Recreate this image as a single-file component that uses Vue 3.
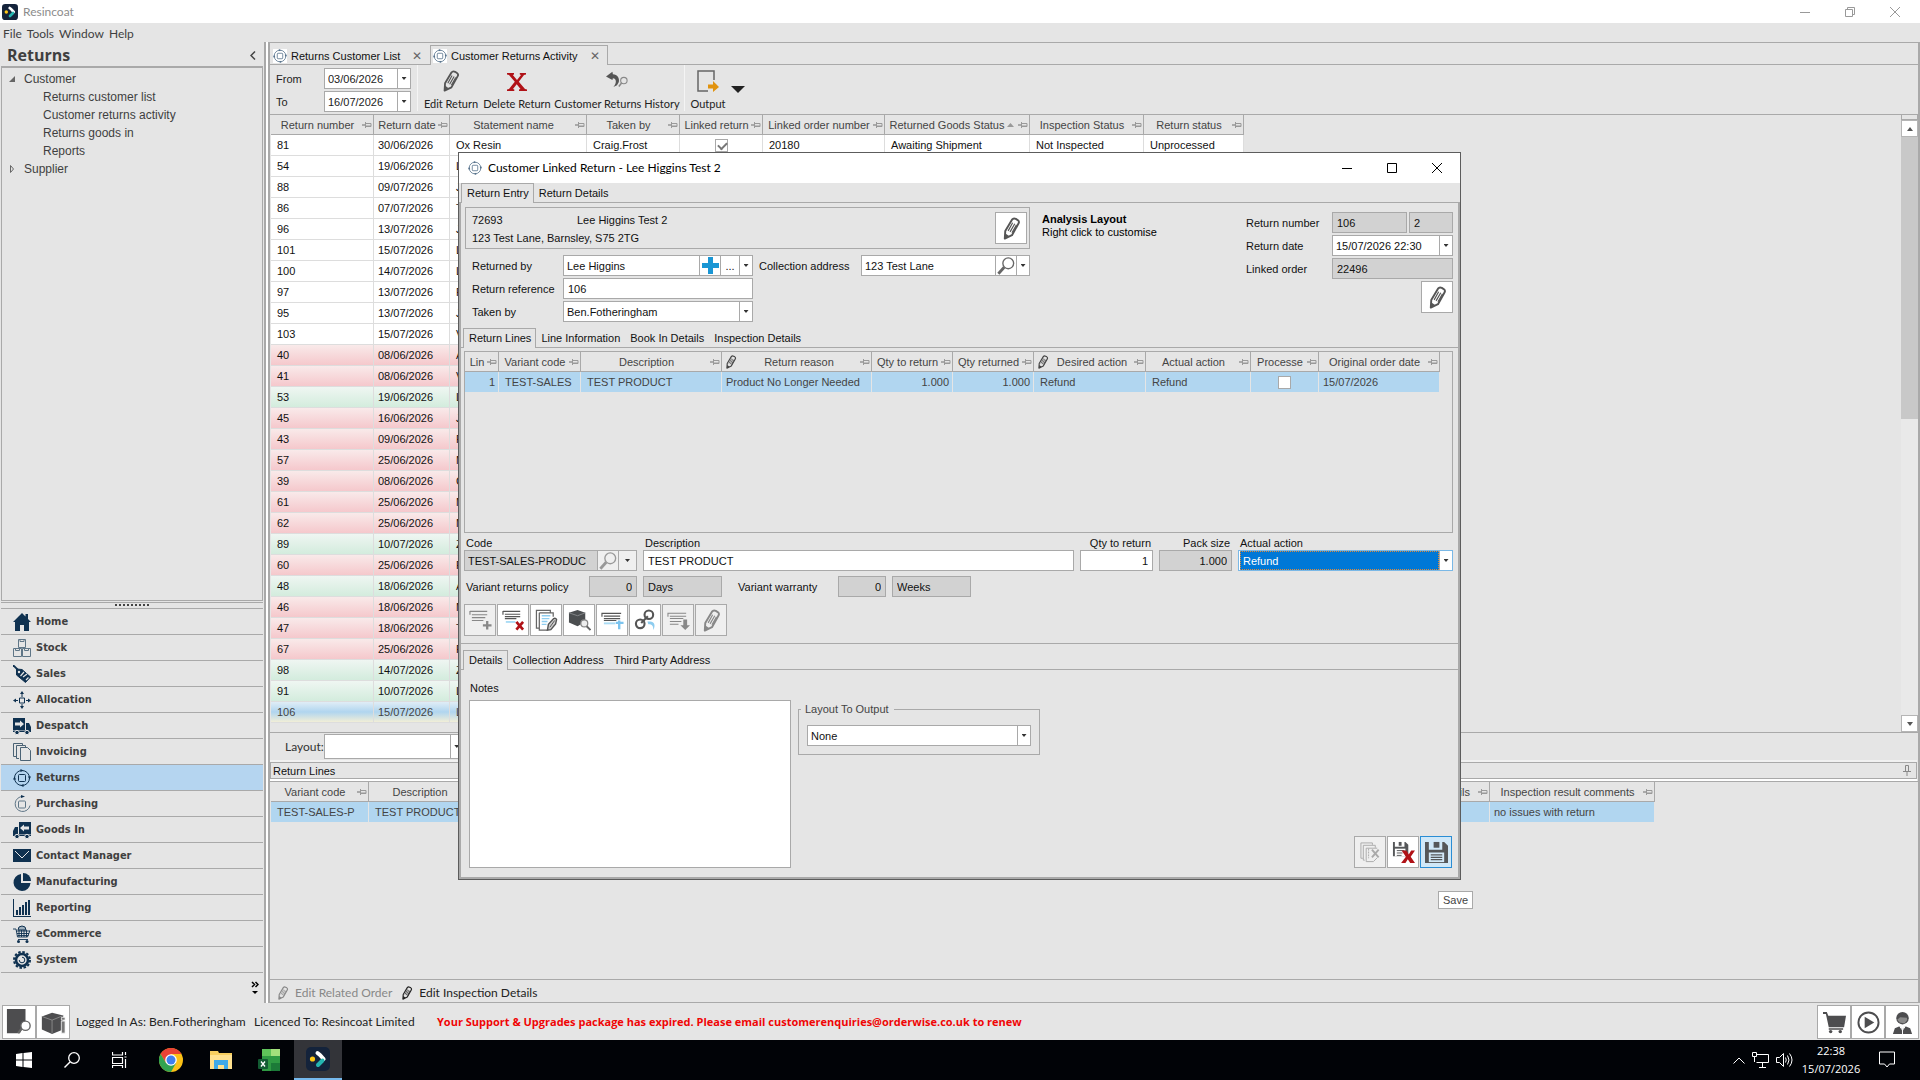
<script setup>
import { ref } from 'vue'

const menus = ['File', 'Tools', 'Window', 'Help']
const treeItems = ['Returns customer list', 'Customer returns activity', 'Returns goods in', 'Reports']
const modules = [
  ['Home', 'home'], ['Stock', 'stock'], ['Sales', 'tag'], ['Allocation', 'alloc'],
  ['Despatch', 'truck'], ['Invoicing', 'pages'], ['Returns', 'returns'], ['Purchasing', 'purchase'],
  ['Goods In', 'goodsin'], ['Contact Manager', 'mail'], ['Manufacturing', 'pie'],
  ['Reporting', 'chart'], ['eCommerce', 'basket'], ['System', 'gear']
]

const gridCols = [
  { t: 'Return number', w: 103 }, { t: 'Return date', w: 76 }, { t: 'Statement name', w: 137 },
  { t: 'Taken by', w: 93 }, { t: 'Linked return', w: 83 }, { t: 'Linked order number', w: 122 },
  { t: 'Returned Goods Status', w: 145, sort: true }, { t: 'Inspection Status', w: 114 }, { t: 'Return status', w: 100 }
]
const gridRows = [
  ['81', '30/06/2026', 'Ox Resin', ''], ['54', '19/06/2026', 'L', ''], ['88', '09/07/2026', 'J', ''],
  ['86', '07/07/2026', 'T', ''], ['96', '13/07/2026', 'J', ''], ['101', '15/07/2026', 'L', ''],
  ['100', '14/07/2026', 'L', ''], ['97', '13/07/2026', 'F', ''], ['95', '13/07/2026', 'J', ''],
  ['103', '15/07/2026', 'V', ''], ['40', '08/06/2026', 'A', 'red'], ['41', '08/06/2026', 'V', 'red'],
  ['53', '19/06/2026', 'L', 'green'], ['45', '16/06/2026', 'J', 'red'], ['43', '09/06/2026', 'F', 'red'],
  ['57', '25/06/2026', 'M', 'red'], ['39', '08/06/2026', 'C', 'red'], ['61', '25/06/2026', 'M', 'red'],
  ['62', '25/06/2026', 'M', 'red'], ['89', '10/07/2026', 'Z', 'green'], ['60', '25/06/2026', 'F', 'red'],
  ['48', '18/06/2026', 'A', 'green'], ['46', '18/06/2026', 'M', 'red'], ['47', '18/06/2026', 'T', 'red'],
  ['67', '25/06/2026', 'F', 'red'], ['98', '14/07/2026', 'Z', 'green'], ['91', '10/07/2026', 'L', 'green'],
  ['106', '15/07/2026', 'L', 'current']
]

const lineCols = [
  { t: 'Lin', w: 34 }, { t: 'Variant code', w: 82 }, { t: 'Description', w: 141 },
  { t: 'Return reason', w: 150, edit: true }, { t: 'Qty to return', w: 81 }, { t: 'Qty returned', w: 81 },
  { t: 'Desired action', w: 112, edit: true }, { t: 'Actual action', w: 105 }, { t: 'Processe', w: 68 },
  { t: 'Original order date', w: 121 }
]
const lowerCols = [
  { t: 'Variant code', w: 98 }, { t: 'Description', w: 112 }, { t: '', w: 869 },
  { t: 'Details', w: 140, end: true }, { t: 'Inspection result comments', w: 165 }
]
const lineTools = [
  ['addline', 'Add line', true], ['delline', 'Delete line', false], ['editdoc', 'Edit notes', false],
  ['boxfind', 'Find stock', false], ['insline', 'Insert line', false], ['link', 'Link', false],
  ['downline', 'Move down', true], ['pencil', 'Edit', true]
]

const dateFrom = ref('03/06/2026')
const dateTo = ref('16/07/2026')
const returnedBy = ref('Lee Higgins')
const reference = ref('106')
const collection = ref('123 Test Lane')
const returnDate = ref('15/07/2026 22:30')
const lineDesc = ref('TEST PRODUCT')
const lineQty = ref('1')
const notes = ref('')
</script>

<template>
  <svg class="defs" aria-hidden="true">
    <symbol id="i-logo" viewBox="0 0 24 24">
      <rect width="24" height="24" rx="5" fill="#14233b" />
      <circle cx="6.500" cy="12" r="2.600" fill="#ffc815" />
      <path d="M11.500 6l2.500 2 3.600 4" fill="none" stroke="#fff" stroke-width="4" stroke-linecap="round" stroke-linejoin="round" />
      <path d="M16.500 13.500l-4.500 4.500" fill="none" stroke="#24b5b0" stroke-width="4" stroke-linecap="round" />
    </symbol>
    <symbol id="i-returns" viewBox="0 0 18 18">
      <circle cx="9" cy="9" r="7.500" fill="none" stroke="currentColor" stroke-width="1" />
      <rect x="5.500" y="5.500" width="7" height="7" rx="1" fill="none" stroke="currentColor" />
      <path d="M7.500 0l3 1.500-3 1.500zM18 7.500l-1.500 3-1.500-3zM10.500 18l-3-1.500 3-1.500zM0 10.500l1.500-3 1.500 3z" fill="currentColor" />
    </symbol>
    <symbol id="i-pencil" viewBox="0 0 24 24">
      <path d="M5 22.500l.5-8L12.500 2.800q1.500-2 4-.8l2 1.200q2 1.300.8 3.500L12.500 19z" fill="none" stroke="currentColor" stroke-width="2" stroke-linejoin="round" />
      <path d="M5 22.500l.4-5.500 4 2.800z" fill="currentColor" />
      <path d="M8.500 14.500L13.200 6M10.500 15.500L15.400 7M12.500 16.500L17.200 8.200" stroke="currentColor" stroke-width="1.200" fill="none" />
    </symbol>
    <symbol id="i-cross" viewBox="0 0 20 18">
      <path d="M0 0h7v1.500L5.800 2 10 7l4-5-1.200-.5V0H19v1.500L17 2l-5.200 6.800L18 16l2 .5V18h-8v-1.500l1.500-.5L9.700 11.200 6 16l1.300.5V18H0v-1.500L2 16l5.800-7.200L2 2 0 1.500z" fill="#b01217" />
    </symbol>
    <symbol id="i-history" viewBox="0 0 24 24">
      <path d="M0 7l7-5 .5 2.500c5 .5 7.500 4 6.500 8.500l-2 3.500-4 2c3.500-3.500 4-9-.5-9.500L7 11z" fill="#555" />
      <circle cx="19.500" cy="11.500" r="3.500" fill="none" stroke="#888" stroke-width="1.200" />
      <path d="M17 14.200l-3 3.800" stroke="#888" stroke-width="1.600" />
    </symbol>
    <symbol id="i-output" viewBox="0 0 22 22">
      <path d="M17 10V1H1v20h10" fill="none" stroke="#666" stroke-width="1.500" />
      <path d="M11 14.500h5V11l6 6-6 5v-3.500h-5z" fill="#e1930f" />
    </symbol>
    <symbol id="i-pin" viewBox="0 0 10 8">
      <path d="M0 4h3" stroke="#aaa" stroke-width="2" /><path d="M3.500 1v6M4 2.500h5v3H4M4 5h5" stroke="#999" fill="none" />
    </symbol>
    <symbol id="i-search" viewBox="0 0 20 20">
      <circle cx="12.500" cy="7" r="6" fill="none" stroke="currentColor" stroke-width="1.500" />
      <path d="M8 11.500L1.500 18.500" stroke="currentColor" stroke-width="3.200" />
    </symbol>
    <symbol id="i-home" viewBox="0 0 18 18"><path d="M9 0l3.500 3.500V1H15v5l3 3h-2v9h-5v-6H7v6H2V9H0z" fill="currentColor" /></symbol>
    <symbol id="i-stock" viewBox="0 0 18 18"><path d="M5.500.5h7v8h-7zM.5 9.500h8v8h-8zM9.500 9.500h8v8h-8zM7 .5v2h4v-2M2.500 9.500v2h4v-2M11.500 9.500v2h4v-2" fill="none" stroke="#5f7687" /></symbol>
    <symbol id="i-tag" viewBox="0 0 18 18">
      <path d="M0 0l5 5" stroke="currentColor" stroke-width="1.800" />
      <path d="M3.500 4l5.500.500 8.500 7.500-5 5.500-9-7.500z" fill="currentColor" stroke="currentColor" stroke-linejoin="round" />
      <circle cx="6" cy="7" r="1.200" fill="#e5e5e5" />
      <path d="M7.500 11l3.500-4M10 12l4-3M13 15l2.500-2.500" stroke="#e5e5e5" stroke-width="1.200" />
    </symbol>
    <symbol id="i-alloc" viewBox="0 0 18 18">
      <path d="M6.500 7h5v5h-5zM9 2v4M9 13v3M1 9.500h4M13 9.500h4" fill="none" stroke="currentColor" />
      <path d="M9 0l2 3H7zM9 18l-2-3h4zM0 9.500l3-2v4zM18 9.500l-3-2v4z" fill="currentColor" />
    </symbol>
    <symbol id="i-truck" viewBox="0 0 18 18">
      <path d="M0 1h12v12H0zM13 6h3l2 4v4h-5z" fill="currentColor" />
      <path d="M0 13.500h18v1.500H0z" fill="currentColor" />
      <circle cx="4" cy="15.500" r="2.200" fill="currentColor" stroke="#e5e5e5" /><circle cx="14" cy="15.500" r="2.200" fill="currentColor" stroke="#e5e5e5" />
      <path d="M2 5.500h5V3.500l4 3.500-4 3.500V8.500H2z" fill="#e5e5e5" />
    </symbol>
    <symbol id="i-goodsin" viewBox="0 0 18 18">
      <path d="M6 1h12v12H6zM5 6H2l-2 4v4h5z" fill="currentColor" />
      <path d="M0 13.500h18v1.500H0z" fill="currentColor" />
      <circle cx="4" cy="15.500" r="2.200" fill="currentColor" stroke="#e5e5e5" /><circle cx="14" cy="15.500" r="2.200" fill="currentColor" stroke="#e5e5e5" />
      <path d="M16 5.500h-5V3.500L7 7l4 3.500V8.500h5z" fill="#e5e5e5" />
    </symbol>
    <symbol id="i-pages" viewBox="0 0 18 18"><path d="M3 13.500H.5V.5h9V3M6 15.500H3.500v-13h9V5M7.500 4.500h7l3 3v10h-10z" fill="none" stroke="#4b6375" /></symbol>
    <symbol id="i-purchase" viewBox="0 0 18 18">
      <path d="M10 1.500a7.500 7.500 0 1 0 7 9" fill="none" stroke="#5f7687" />
      <rect x="5.500" y="6" width="7" height="7" rx="1" fill="none" stroke="#5f7687" />
      <path d="M8 0l4 1.500L8 3z" fill="currentColor" />
    </symbol>
    <symbol id="i-mail" viewBox="0 0 18 18"><path d="M0 2h18v13H0z" fill="currentColor" /><path d="M2 4l7 7 7-7" stroke="#e5e5e5" fill="none" /></symbol>
    <symbol id="i-pie" viewBox="0 0 18 18"><path d="M8 1a8.500 8.500 0 1 0 9.500 9H8z" fill="currentColor" /><path d="M10 0a8 8 0 0 1 8 8h-8z" fill="currentColor" /></symbol>
    <symbol id="i-chart" viewBox="0 0 18 18"><path d="M0 0h1v17h17v1H0zM3 11h2v5H3zM6 8h2v8H6zM9 6h2v10H9zM12 3h2v13h-2zM15 1h2v15h-2z" fill="currentColor" /></symbol>
    <symbol id="i-basket" viewBox="0 0 18 18">
      <path d="M5 5a4 4 0 0 1 8 0z" fill="#9fb0bd" stroke="currentColor" />
      <path d="M0 4h3l1.500 8h10L17 5.500M3 6h14M4 8.500h12M4.500 10.500h11M6 5v7M8.500 5v7M11 5v7M13.500 5v7M5 14.500h10" fill="none" stroke="currentColor" stroke-width=".9" />
      <circle cx="5.500" cy="16.500" r="1.500" fill="currentColor" /><circle cx="14" cy="16.500" r="1.500" fill="currentColor" />
    </symbol>
    <symbol id="i-gear" viewBox="0 0 18 18">
      <circle cx="9" cy="9" r="8" fill="none" stroke="currentColor" stroke-width="2" stroke-dasharray="2.500 1.700" />
      <circle cx="9" cy="9" r="6" fill="none" stroke="currentColor" stroke-width="2.600" />
      <path d="M6.200 9a2.800 2.800 0 1 0 2.800-2.800" fill="none" stroke="currentColor" />
    </symbol>
    <symbol id="i-addline" viewBox="0 0 24 24">
      <path d="M1 2.500h18M1 2v4M3 6h16M3 9h14M3 12h12" stroke="currentColor" fill="none" stroke-width="1.200" />
      <path d="M19 12.500v9M14.500 17h9" stroke="currentColor" stroke-width="2.400" />
    </symbol>
    <symbol id="i-delline" viewBox="0 0 24 24">
      <path d="M1 2.500h18M1 2v4M3 5.500h16M3 8h16M3 10h12" stroke="#555" fill="none" stroke-width="1.200" />
      <path d="M4 13.500h10" stroke="#aadcf5" stroke-width="2" />
      <path d="M15 13.500l7 8M22 13.500l-7 8" stroke="#b01217" stroke-width="2.800" />
    </symbol>
    <symbol id="i-editdoc" viewBox="0 0 24 24">
      <path d="M4 20H1.500V1.500H16V4M4.500 4H19v4M4.500 4v18H13" fill="none" stroke="#666" stroke-width="1.300" />
      <path d="M7 7h9M7 10h8M7 13h6M7 16h5" stroke="#8ecdf0" stroke-width="1.400" />
      <path d="M13 22l1-6 5.500-6q2-1 3 1l-1 4.500-5 6z" fill="#ccc" stroke="#555" stroke-width="1.500" />
      <path d="M15.500 19l5-7" stroke="#555" />
    </symbol>
    <symbol id="i-boxfind" viewBox="0 0 24 24">
      <path d="M1 4l9-3 8 3v9l-8 5-9-4z" fill="#4b4e50" /><path d="M1 4l9 3 8-3" stroke="#85888a" fill="none" />
      <circle cx="17" cy="15" r="3.600" fill="#eee" stroke="#888" stroke-width="1.300" /><path d="M19.500 18l4 4" stroke="#666" stroke-width="2" />
    </symbol>
    <symbol id="i-insline" viewBox="0 0 24 24">
      <path d="M1 4.500h20M1 4v4M3 7.500h17M3 10h17M3 12h13" stroke="#555" fill="none" stroke-width="1.200" />
      <path d="M3 15h12" stroke="#aadcf5" stroke-width="2" /><path d="M19 12v9M15.500 14.500h8" stroke="#7cc4ef" stroke-width="2.500" />
    </symbol>
    <symbol id="i-link" viewBox="0 0 24 24">
      <g fill="none" stroke="#555" stroke-width="2.200"><rect x="11" y="1.500" width="9" height="9" rx="4.500" /><rect x="2" y="11" width="9" height="9" rx="4.500" /><path d="M7.500 14.500l7-7" /></g>
      <path d="M14 13h3c4 0 6 4 3 9 .5-4-1-6-5-6z" fill="#8ecdf0" />
    </symbol>
    <symbol id="i-downline" viewBox="0 0 24 24">
      <path d="M1 4.500h19M1 4v4M3 7.500h17M3 10h14M3 13h12M3 16h9" stroke="currentColor" fill="none" stroke-width="1.100" />
      <path d="M17 11h4v6h3l-5 5-5-5h3z" fill="currentColor" />
    </symbol>
    <symbol id="i-floppy" viewBox="0 0 24 24">
      <path d="M0 1h4v8h14V1h2l4 4v18H0z" fill="#555759" /><path d="M9 1h6v6H9z" fill="#555759" />
      <path d="M4 12h16v10H4z" fill="#d3e9f8" /><path d="M6 14.500h12M6 17h12M6 19.500h12" stroke="#555759" stroke-width="1.300" />
    </symbol>
    <symbol id="i-floppyx" viewBox="0 0 24 24">
      <path d="M1 1h2v5h10V1h1l3 3v12H1z" fill="#555759" /><path d="M7 1h3v4H7z" fill="#555759" />
      <path d="M3 8h11v8H3z" fill="#fff" /><path d="M5 10h8M5 12.500h6M5 15h5" stroke="#555759" />
      <path d="M10 10h5l2.500 4L20 10h4l-4.500 6.500L24 23h-5l-2.500-4L14 23H9.500l5-6.500z" fill="#b01217" />
    </symbol>
    <symbol id="i-docx" viewBox="0 0 24 24">
      <path d="M4 18H2V2h12v2M6 20H4.500V4.500H17V7M7.500 7.500H19M7.500 7.500v14H15l4-4" fill="none" stroke="#aaa" />
      <path d="M10 8v10" stroke="#aaa" stroke-dasharray="2 1" /><path d="M13.500 9l7 8M20.500 9l-7 8" stroke="#aaa" stroke-width="2" />
    </symbol>
    <symbol id="i-docfind" viewBox="0 0 28 28">
      <path d="M1 0h20v14l-6 12H1z" fill="#4d4d4f" /><circle cx="21" cy="18" r="5" fill="#fff" stroke="#666" stroke-width="1.500" /><path d="M17 21l-4 5" stroke="#666" stroke-width="2.500" />
    </symbol>
    <symbol id="i-boxinfo" viewBox="0 0 28 28">
      <path d="M2 8l11-4 12 3v15l-12 5L2 22z" fill="#4d4d4f" /><path d="M2 8l11 4 12-5M13 12v14" stroke="#8a8a8a" fill="none" />
      <path d="M23 13h4v13h-4zM23 9h4v3h-4z" fill="#777" stroke="#fff" stroke-width=".8" />
    </symbol>
    <symbol id="i-cart" viewBox="0 0 24 24"><path d="M0 1h4l1.500 4H24l-2 12H6L3 3H0zM6 18h15v1.500H6z" fill="#4d4d4f" /><circle cx="8" cy="21.500" r="1.800" fill="#4d4d4f" /><circle cx="18" cy="21.500" r="1.800" fill="#4d4d4f" /></symbol>
    <symbol id="i-play" viewBox="0 0 24 24"><circle cx="12" cy="12" r="10.500" fill="none" stroke="#4d4d4f" stroke-width="2" /><path d="M8 6l10 6-10 6z" fill="#4d4d4f" /></symbol>
    <symbol id="i-agent" viewBox="0 0 24 24">
      <circle cx="12" cy="7.500" r="6.500" fill="#4d4d4f" /><path d="M6.500 9l3-2.500 7 .5.5 2.500-3 3.500-5-1z" fill="#8a8a8a" /><path d="M2 24l2-6 5-2 3 3 3-3 5 2 2 6z" fill="#4d4d4f" />
      <path d="M9 16l3 4 3-4M12 19v5" stroke="#fff" fill="none" />
    </symbol>
  </svg>

  <div class="app">
    <header class="titlebar">
      <svg class="s16"><use href="#i-logo" /></svg>
      <span class="grow">Resincoat</span>
      <button class="cap" aria-label="Minimise"><svg viewBox="0 0 10 10"><path d="M0 5.500h10" /></svg></button>
      <button class="cap" aria-label="Restore"><svg viewBox="0 0 10 10"><path d="M.5 2.500h7v7h-7zM2.500 2.500v-2h7v7h-2" /></svg></button>
      <button class="cap" aria-label="Close"><svg viewBox="0 0 10 10"><path d="M0 0l10 10M10 0L0 10" /></svg></button>
    </header>

    <div class="work">
      <aside class="side">
        <nav class="menubar"><a v-for="m in menus" :key="m" href="#">{{ m }}</a></nav>
        <div class="side-title"><h1>Returns</h1><button class="bare" aria-label="Collapse"><svg width="6" height="9" viewBox="0 0 6 9"><path d="M5 0.500L1 4.500l4 4" fill="none" stroke="#444" stroke-width="1.500" /></svg></button></div>
        <div class="tree">
          <div class="node"><svg class="s8" viewBox="0 0 8 8"><path d="M7 1v6H1z" fill="#666" /></svg>Customer</div>
          <a v-for="t in treeItems" :key="t" href="#" class="leaf">{{ t }}</a>
          <div class="node"><svg class="s8" viewBox="0 0 8 8"><path d="M2.500 .5v7l3-3.500z" fill="none" stroke="#666" /></svg>Supplier</div>
        </div>
        <div class="splitter"><i></i></div>
        <nav class="modules">
          <a v-for="m in modules" :key="m[0]" href="#" :class="{ on: m[0] === 'Returns' }"><svg class="s18"><use :href="'#i-' + m[1]" /></svg>{{ m[0] }}</a>
        </nav>
        <div class="more"><svg width="8" height="14" viewBox="0 0 8 14"><path d="M1 1l2.500 2.500L1 6M4.500 1L7 3.500 4.500 6" fill="none" stroke="#000" stroke-width="1.500" /><path d="M1 10h6l-3 3z" /></svg></div>
      </aside>

      <main class="main">
        <div class="tabs maintabs">
          <button class="tab"><svg class="tabico"><use href="#i-returns" /></svg>Returns Customer List<b>✕</b></button>
          <button class="tab on"><svg class="tabico"><use href="#i-returns" /></svg>Customer Returns Activity<b>✕</b></button>
        </div>
        <div class="toolbar">
          <div class="dates">
            <label for="dfrom">From</label>
            <span class="combo"><input id="dfrom" v-model="dateFrom"><button class="dd" aria-label="Pick from date"><i></i></button></span>
            <label for="dto">To</label>
            <span class="combo"><input id="dto" v-model="dateTo"><button class="dd" aria-label="Pick to date"><i></i></button></span>
          </div>
          <button class="tool t-edit"><svg><use href="#i-pencil" /></svg>Edit Return</button>
          <button class="tool t-del"><svg><use href="#i-cross" /></svg>Delete Return</button>
          <button class="tool t-hist"><svg><use href="#i-history" /></svg>Customer Returns History</button>
          <button class="tool t-out"><svg><use href="#i-output" /></svg>Output</button>
          <button class="bare outarrow" aria-label="Output options"><svg width="14" height="7" viewBox="0 0 14 7"><path d="M0 0h14L7 7z" fill="#222" /></svg></button>
        </div>

        <div class="gridwrap">
          <div class="gridbody">
            <table class="grid">
              <colgroup><col v-for="c in gridCols" :key="c.t" :style="{ width: c.w + 'px' }"></colgroup>
              <thead><tr><th v-for="c in gridCols" :key="c.t"><div><span>{{ c.t }}</span><svg v-if="c.sort" class="sort" viewBox="0 0 7 4"><path d="M0 4h7L3.500 0z" fill="#999" /></svg><svg class="pin"><use href="#i-pin" /></svg></div></th></tr></thead>
              <tbody>
                <tr v-for="(r, i) in gridRows" :key="r[0]" :class="r[3]">
                  <td>{{ r[0] }}</td><td class="near">{{ r[1] }}</td><td>{{ r[2] }}</td>
                  <td>{{ i ? '' : 'Craig.Frost' }}</td>
                  <td class="mid"><input v-if="!i" type="checkbox" checked aria-label="Linked return"></td>
                  <td>{{ i ? '' : '20180' }}</td><td>{{ i ? '' : 'Awaiting Shipment' }}</td>
                  <td>{{ i ? '' : 'Not Inspected' }}</td><td>{{ i ? '' : 'Unprocessed' }}</td>
                </tr>
              </tbody>
            </table>
          </div>
          <div class="vscroll"><span class="stub"></span><button aria-label="Scroll up"><svg viewBox="0 0 6 4"><path d="M0 4h6L3 0z" /></svg></button><span class="thumb"></span><span class="track"></span><button aria-label="Scroll down"><svg viewBox="0 0 6 4"><path d="M0 0h6L3 4z" /></svg></button></div>
        </div>
        <div class="layoutbar">
          <label for="layout">Layout:</label>
          <span class="combo"><select id="layout"><option></option></select><span class="dd"><i></i></span></span>
        </div>
        <div class="subhead"><span class="grow">Return Lines</span><svg width="8" height="11" viewBox="0 0 8 11"><path d="M2.500 6V.5h3V6M0 6.500h8M4 7v4" fill="none" stroke="#888" /></svg></div>
        <div class="lower">
          <table class="grid">
            <colgroup><col v-for="(c, i) in lowerCols" :key="i" :style="{ width: c.w + 'px' }"></colgroup>
            <thead><tr><th v-for="(c, i) in lowerCols" :key="i"><div :class="{ end: c.end }"><span>{{ c.t }}</span><svg class="pin"><use href="#i-pin" /></svg></div></th></tr></thead>
            <tbody><tr class="sel"><td>TEST-SALES-P</td><td>TEST PRODUCT</td><td></td><td></td><td class="tight">no issues with return</td></tr></tbody>
          </table>
        </div>
        <div class="actions">
          <button class="bare" disabled><svg class="s14"><use href="#i-pencil" /></svg>Edit Related Order</button>
          <button class="bare"><svg class="s14"><use href="#i-pencil" /></svg>Edit Inspection Details</button>
        </div>
      </main>
    </div>

    <footer class="status">
      <button class="sq" aria-label="Find document"><svg><use href="#i-docfind" /></svg></button>
      <button class="sq" aria-label="Stock information"><svg><use href="#i-boxinfo" /></svg></button>
      <span class="who">Logged In As: Ben.Fotheringham</span><span class="lic">Licenced To: Resincoat Limited</span>
      <strong class="grow">Your Support &amp; Upgrades package has expired. Please email customerenquiries@orderwise.co.uk to renew</strong>
      <button class="sq" aria-label="Store"><svg><use href="#i-cart" /></svg></button>
      <button class="sq" aria-label="Videos"><svg><use href="#i-play" /></svg></button>
      <button class="sq" aria-label="Support"><svg><use href="#i-agent" /></svg></button>
    </footer>

    <div class="taskbar">
      <button aria-label="Start"><svg width="16" height="16" viewBox="0 0 16 16"><path d="M0 2l6.500-1v6.500H0zM7.500 1L16 0v7.500H7.500zM0 8.500h6.500V15L0 14zM7.500 8.500H16V16l-8.500-1z" fill="#fff" /></svg></button>
      <button aria-label="Search"><svg width="16" height="16" viewBox="0 0 16 16"><circle cx="10" cy="6" r="5.300" fill="none" stroke="#fff" stroke-width="1.300" /><path d="M6 10l-5.500 5.500" stroke="#fff" stroke-width="1.400" /></svg></button>
      <button aria-label="Task view"><svg width="16" height="16" viewBox="0 0 16 16"><path d="M.5 0v3h10V0M.5 5.500h10v6H.5zM.5 16v-2.500h10V16M13.500 0v3M13.500 7v9M12.500 5h2" fill="none" stroke="#fff" stroke-width="1.200" /></svg></button>
      <button class="wide" aria-label="Chrome"><svg width="24" height="24" viewBox="0 0 24 24"><circle cx="12" cy="12" r="12" fill="#fbc116" /><path d="M1.600 6A12 12 0 0 1 22.400 6H12l-5 9z" fill="#e94235" /><path d="M1.600 6A12 12 0 0 0 12 24l5-9-10 0z" fill="#31a350" /><circle cx="12" cy="12" r="5.800" fill="#fff" /><circle cx="12" cy="12" r="4.500" fill="#3f7fee" /></svg></button>
      <button aria-label="File Explorer"><svg width="22" height="20" viewBox="0 0 22 20"><path d="M0 1h8l1 2h13v16H0z" fill="#f7ce5f" /><path d="M0 5h22v14H0z" fill="#ffe18f" /><path d="M4 19v-9h14v9h-4v-4H8v4z" fill="#3fa9e8" /></svg></button>
      <button aria-label="Excel"><svg width="22" height="22" viewBox="0 0 22 22"><path d="M4 0h18v22H4z" fill="#2f9a43" /><path d="M4 0h9v7H4z" fill="#5fc35a" /><path d="M13 0h9v7h-9z" fill="#a4e07c" /><path d="M13 14h9v8h-9z" fill="#1c7a38" /><rect y="10" width="10" height="10" rx="1" fill="#135c33" /><path d="M3 12.500l4 5M7 12.500l-4 5" stroke="#fff" stroke-width="1.300" /></svg></button>
      <button class="active" aria-label="OrderWise"><svg width="24" height="24"><use href="#i-logo" /></svg></button>
      <span class="grow"></span>
      <div class="tray">
        <svg width="12" height="7" viewBox="0 0 12 7"><path d="M.5 6.500L6 1l5.500 5.500" /></svg>
        <svg width="17" height="16" viewBox="0 0 17 16"><path d="M4.500 2.500h12v8h-12M10.500 11v4M7 15.500h7M.5.500h4v4h-4zM2.500 5v5" /></svg>
        <svg width="17" height="16" viewBox="0 0 17 16"><path d="M.5 5.500h3l4-4v13l-4-4h-3zM9.500 5.500q1.500 2.500 0 5M11.500 3.500q3 4.500 0 9M13.500 1.500q5 6.500 0 13" /></svg>
      </div>
      <div class="clock"><span>22:38</span><span>15/07/2026</span></div>
      <button class="notif" aria-label="Notifications"><svg width="16" height="18" viewBox="0 0 16 18"><path d="M.5 1h15v12h-5L8 16l-2.500-3h-5z" fill="none" stroke="#fff" /></svg></button>
    </div>

    <section class="dialog" role="dialog" aria-label="Customer Linked Return">
      <header class="dtitle">
        <svg class="s14 steel"><use href="#i-returns" /></svg>
        <span class="grow">Customer Linked Return - Lee Higgins Test 2</span>
        <button class="cap" aria-label="Minimise"><svg viewBox="0 0 10 10"><path d="M0 5.500h10" /></svg></button>
        <button class="cap" aria-label="Maximise"><svg viewBox="0 0 10 10"><path d="M.5.500h9v9h-9z" /></svg></button>
        <button class="cap" aria-label="Close"><svg viewBox="0 0 10 10"><path d="M0 0l10 10M10 0L0 10" /></svg></button>
      </header>
      <div class="tabs"><button class="tab on">Return Entry</button><button class="tab">Return Details</button></div>
      <div class="dbody">
        <div class="entry">
          <div class="who-col">
            <div class="custbox">
              <div class="cust"><span>72693</span><span>Lee Higgins Test 2</span><span class="addr">123 Test Lane, Barnsley, S75 2TG</span></div>
              <button class="ib" aria-label="Edit customer"><svg><use href="#i-pencil" /></svg></button>
            </div>
            <div class="fields">
              <label for="rby">Returned by</label>
              <span class="combo"><input id="rby" v-model="returnedBy"><button class="dd w21" aria-label="Add contact"><svg width="17" height="17" viewBox="0 0 17 17"><path d="M8.500 0v17M0 8.500h17" stroke="#1a96d4" stroke-width="5" /></svg></button><button class="dd w19">...</button><button class="dd" aria-label="Choose contact"><i></i></button></span>
              <label for="coll" class="coll">Collection address</label>
              <span class="combo"><input id="coll" v-model="collection"><button class="dd w21" aria-label="Search address"><svg width="18" height="18"><use href="#i-search" /></svg></button><button class="dd" aria-label="Choose address"><i></i></button></span>
              <label for="rref">Return reference</label>
              <input id="rref" v-model="reference" class="box">
              <label for="taken" class="newrow">Taken by</label>
              <span class="combo"><select id="taken"><option>Ben.Fotheringham</option></select><span class="dd"><i></i></span></span>
            </div>
          </div>
          <div class="analysis"><strong>Analysis Layout</strong><span>Right click to customise</span></div>
          <div class="meta">
            <label for="rno">Return number</label><span class="pair"><input id="rno" class="box off" value="106" readonly><input class="box off" value="2" readonly aria-label="Revision"></span>
            <label for="rdate">Return date</label><span class="combo"><input id="rdate" v-model="returnDate"><button class="dd" aria-label="Pick return date"><i></i></button></span>
            <label for="lorder">Linked order</label><input id="lorder" class="box off" value="22496" readonly>
            <button class="ib" aria-label="Edit linked order"><svg><use href="#i-pencil" /></svg></button>
          </div>
        </div>

        <div class="tabs"><button class="tab on">Return Lines</button><button class="tab">Line Information</button><button class="tab">Book In Details</button><button class="tab">Inspection Details</button></div>
        <div class="lines">
          <div class="linegrid">
            <table class="grid">
              <colgroup><col v-for="c in lineCols" :key="c.t" :style="{ width: c.w + 'px' }"></colgroup>
              <thead><tr><th v-for="c in lineCols" :key="c.t"><div><svg v-if="c.edit" class="s14"><use href="#i-pencil" /></svg><span>{{ c.t }}</span><svg class="pin"><use href="#i-pin" /></svg></div></th></tr></thead>
              <tbody><tr class="sel"><td class="num">1</td><td>TEST-SALES</td><td>TEST PRODUCT</td><td class="near">Product No Longer Needed</td><td class="num">1.000</td><td class="num">1.000</td><td>Refund</td><td>Refund</td><td class="mid"><input type="checkbox" aria-label="Processed"></td><td class="near">15/07/2026</td></tr></tbody>
            </table>
          </div>
          <div class="linefields">
            <label for="code">Code</label><label for="desc">Description</label><label for="qty" class="r">Qty to return</label><label for="pack" class="r">Pack size</label><label for="act">Actual action</label>
            <span class="combo offc"><input id="code" value="TEST-SALES-PRODUC" readonly><button class="dd w21" disabled aria-label="Search code"><svg width="18" height="18"><use href="#i-search" /></svg></button><button class="dd w18" disabled aria-label="Choose code"><i></i></button></span>
            <input id="desc" v-model="lineDesc" class="box">
            <input id="qty" v-model="lineQty" class="box r">
            <input id="pack" value="1.000" class="box off r" readonly>
            <span class="combo focus"><select id="act"><option>Refund</option></select><span class="dd"><i></i></span></span>
          </div>
          <div class="policy">
            <label for="pol">Variant returns policy</label><input id="pol" class="box off r" value="0" readonly><input class="box off unit" value="Days" readonly aria-label="Policy unit">
            <label for="war">Variant warranty</label><input id="war" class="box off r" value="0" readonly><input class="box off unit" value="Weeks" readonly aria-label="Warranty unit">
          </div>
          <div class="linetools"><button v-for="t in lineTools" :key="t[0]" class="ib" :aria-label="t[1]" :disabled="t[2]"><svg><use :href="'#i-' + t[0]" /></svg></button></div>
        </div>

        <div class="tabs last"><button class="tab on">Details</button><button class="tab">Collection Address</button><button class="tab">Third Party Address</button></div>
        <div class="details">
          <div class="notes"><label for="notes">Notes</label><textarea id="notes" v-model="notes"></textarea></div>
          <fieldset><legend><label for="lto">Layout To Output</label></legend><span class="combo"><select id="lto"><option>None</option></select><span class="dd"><i></i></span></span></fieldset>
          <div class="savebar">
            <button class="ib" disabled aria-label="Discard"><svg><use href="#i-docx" /></svg></button>
            <button class="ib" aria-label="Cancel"><svg><use href="#i-floppyx" /></svg></button>
            <button class="ib hot" aria-label="Save"><svg><use href="#i-floppy" /></svg></button>
            <div class="tip" role="tooltip">Save</div>
          </div>
        </div>
      </div>
    </section>
  </div>
</template>

<style>
body { margin: 0; background: #e5e5e5; }
</style>

<style scoped>
* { box-sizing: border-box; }
.defs { position: absolute; width: 0; height: 0; }
.app { position: relative; display: flex; flex-direction: column; min-height: 100vh; overflow: hidden; background: #e5e5e5; color: #111; font: 11px/14px "Liberation Sans", Arial, sans-serif; }
button, input, select, textarea { font: inherit; color: inherit; margin: 0; padding: 0; border: 0; border-radius: 0; background: none; outline: 0; }
select { appearance: none; }
a { color: inherit; text-decoration: none; }
svg { display: block; flex: none; }
.grow { flex: 1; }
.s8 { width: 8px; height: 8px; }
.s14 { width: 14px; height: 14px; }
.s16 { width: 16px; height: 16px; }
.s18 { width: 18px; height: 18px; }
.steel { color: #54708a; }
.bare { display: flex; align-items: center; }

.titlebar { display: flex; align-items: center; height: 23px; padding: 0 3px 0 2px; background: #fff; color: #8c8c8c; font: 12px/16px Lato, sans-serif; }
.titlebar .grow { margin-left: 5px; }
.cap { width: 45px; height: 100%; display: grid; place-items: center; }
.cap svg { width: 10px; height: 10px; fill: none; stroke: #999; }

.work { flex: 1; display: flex; }
.side { width: 268px; padding-right: 4px; flex: none; display: flex; flex-direction: column; color: #3f3f3f; }
.menubar { display: flex; gap: 5px; height: 21px; padding: 3px; font: 12px/16px Lato, sans-serif; }
.side-title { display: flex; justify-content: space-between; align-items: center; height: 22px; padding: 0 8px 0 7px; }
.side-title h1 { margin: 0; font: bold 16px/20px "Open Sans", sans-serif; }
.tree { flex: 1; margin: 0 1px; padding-top: 2px; border: 1px solid #a9a9a9; border-top-width: 2px; font-size: 12px; line-height: 18px; }
.node { display: flex; align-items: center; gap: 8px; padding-left: 6px; }
.leaf { display: block; padding-left: 41px; }
.splitter { height: 8px; margin: 0 1px; border-bottom: 1px solid #a9a9a9; padding-top: 1px; }
.splitter i { display: block; height: 5px; border-top: 1px solid #a9a9a9; background: repeating-linear-gradient(90deg, #444 0 2px, transparent 2px 4px) no-repeat 50% 1px / 34px 2px; }
.modules { margin: 0 1px; font: bold 11px/25px "DejaVu Sans Condensed", "DejaVu Sans", sans-serif; }
.modules a { display: flex; align-items: center; gap: 5px; height: 26px; padding-left: 12px; border-bottom: 1px solid #a9a9a9; }
.modules svg { color: #0f3150; }
.modules .on { background: #b5d5f0; }
.more { height: 30px; padding: 8px 5px 0; display: flex; justify-content: flex-end; }

.main { flex: 1; min-width: 0; display: flex; flex-direction: column; margin-top: 19px; border: 1px solid #a9a9a9; border-left: 2px solid #a9a9a9; border-right-width: 2px; box-shadow: -1px 0 #fff, -2px 0 #fff, -4px 0 #a9a9a9; z-index: 1; }
.tabs { display: flex; height: 20px; padding-left: 2px; box-shadow: inset 0 -1px #a9a9a9; }
.tab { padding: 0 4px 2px; border: 1px solid transparent; border-bottom: 0; display: flex; align-items: center; white-space: nowrap; }
.tab.on { background: #e5e5e5; border-color: #a9a9a9; padding: 0 4px 2px 5px; }
.maintabs { height: 22px; padding: 2px 0 0; }
.maintabs .tab { gap: 4px; padding: 0 7px 0 2px; width: 160px; }
.maintabs .tab.on { width: 178px; padding: 0 7px 0 2px; }
.tabico { width: 14px; height: 14px; background: #fff; color: #54708a; }
.tab b { font: bold 12px/12px "DejaVu Sans", sans-serif; color: #666; margin-left: auto; }
.toolbar { display: flex; align-items: flex-start; height: 49px; font: 11px/14px Lato, sans-serif; color: #222; }
.dates { display: grid; grid-template-columns: 48px 87px; row-gap: 2px; margin: 3px 6px 0 6px; align-items: center; font: 11px/14px "Liberation Sans", sans-serif; }
.combo { display: flex; height: 21px; min-width: 0; background: #fff; border: 1px solid #a9a9a9; }
.combo > input, .combo > select { flex: 1; min-width: 0; width: 0; padding: 0 3px; height: 100%; }
.dd { width: 13px; flex: none; display: grid; place-items: center; border-left: 1px solid #a9a9a9; }
.dd i { width: 5px; height: 3px; background: #333; clip-path: polygon(0 0, 100% 0, 50% 100%); }
.w21 { width: 21px; color: #666; }
.w19 { width: 19px; }
.w18 { width: 18px; }
.tool { display: flex; flex-direction: column; align-items: center; justify-content: space-between; height: 46px; padding-top: 5px; white-space: nowrap; }
.tool svg { width: 22px; height: 22px; color: #555; }
.t-edit { width: 67px; border-left: 1px solid #f4f4f4; }
.t-del { width: 66px; }
.t-del svg { height: 18px; margin-top: 3px; }
.t-hist { width: 135px; border-right: 1px solid #f4f4f4; }
.t-out { width: 46px; }
.outarrow { padding: 21px 0 0; }

.gridwrap { display: flex; height: 619px; border-top: 1px solid #a9a9a9; border-bottom: 1px solid #a9a9a9; padding-left: 1px; }
.gridbody { flex: 1; min-width: 0; overflow: hidden; }
.grid { table-layout: fixed; width: 0; border-collapse: separate; border-spacing: 0; color: #111; }
.grid th { height: 20px; padding: 0; border-right: 1px solid #a9a9a9; border-bottom: 1px solid #a9a9a9; font-weight: normal; color: #444; }
.grid th div { display: flex; align-items: center; padding: 0 1px 0 2px; }
.grid th span { flex: 1; text-align: center; white-space: nowrap; overflow: hidden; }
.grid th .end span { text-align: right; padding-right: 8px; }
.pin { width: 10px; height: 8px; }
.sort { width: 7px; height: 4px; margin-right: 4px; }
.grid td { height: 21px; padding: 0 6px; background: #fff; border-right: 1px solid #ddd; border-bottom: 1px solid #ddd; white-space: nowrap; overflow: hidden; }
.grid td.near, .grid td.tight { padding: 0 4px; }
.grid td.num { text-align: right; padding: 0 3px; }
.grid td.mid { text-align: center; padding: 0; }
.grid .red td { background: linear-gradient(#f9eaea, #f5c8cc); }
.grid .green td { background: linear-gradient(#eff6f2, #d3ecdd); }
.grid .current td { background: linear-gradient(#e0edf6, #b0d5ef 50%, #f1eed8); color: #444; }
.grid .sel td { background: #b1d6f0; color: #444; border-color: #e5e5e5; }
.grid input { appearance: none; display: block; width: 13px; height: 13px; margin: 0 auto; border: 1px solid #a9a9a9; background: #fff; }
.grid input:checked::after { content: ""; display: block; width: 7px; height: 4px; margin: 2px 0 0 2px; border: solid #777; border-width: 0 0 2px 2px; transform: rotate(-45deg); }

.vscroll { width: 17px; display: flex; flex-direction: column; background: #f0f0f0; }
.vscroll .stub { height: 5px; background: #e5e5e5; border: 1px solid #a9a9a9; border-top: 0; }
.vscroll button { height: 17px; background: #fff; border: 1px solid #b5b5b5; display: grid; place-items: center; }
.vscroll button svg { width: 6px; height: 4px; fill: #555; }
.thumb { flex: 282; background: #c8c8c8; }
.track { flex: 297; background: #e9e9e9; }
.layoutbar { display: flex; align-items: center; height: 27px; padding-left: 15px; font: 12px/16px Lato, sans-serif; color: #333; }
.layoutbar .combo { width: 140px; height: 25px; }
.subhead { display: flex; align-items: center; height: 17px; margin: 2px 1px 2px 0; padding: 0 5px 0 2px; border: 1px solid #a9a9a9; box-shadow: 0 -2px #f1f1f1, 0 2px #fff; }
.lower { flex: 1; border-top: 1px solid #a9a9a9; border-bottom: 1px solid #a9a9a9; padding-left: 1px; }
.actions { display: flex; gap: 8px; height: 22px; padding: 3px 6px 0; font: 12px/16px Lato, sans-serif; color: #222; }
.actions .bare { gap: 5px; }
.actions .bare:disabled { color: #888; }

.status { display: flex; align-items: center; height: 37px; padding: 1px 1px 0 2px; font: 12px/16px Lato, sans-serif; color: #222; }
.sq { width: 34px; height: 34px; background: #fff; border: 1px solid #a9a9a9; display: grid; place-items: center; }
.sq svg { width: 26px; height: 26px; }
.grow ~ .sq svg { width: 23px; height: 23px; }
.who { margin-left: 6px; min-width: 172px; }
.lic { margin-left: 6px; min-width: 162px; }
.status strong { margin-left: 21px; color: #f00505; font: bold 11px/16px "Open Sans", sans-serif; }

.taskbar { display: flex; height: 40px; background: #010307; color: #fff; }
.taskbar button { width: 48px; display: grid; place-items: center; }
.taskbar .wide { width: 54px; }
.taskbar .wide + button { margin-left: -1px; }
.taskbar .active { margin-left: 1px; background: #333439; border-bottom: 2px solid #76b9ed; }
.tray { display: flex; align-items: center; gap: 7px; fill: none; stroke: #fff; }
.tray svg { fill: none; }
.clock { display: flex; flex-direction: column; align-items: center; justify-content: center; width: 76px; font: 11px/18px "Open Sans", sans-serif; }
.taskbar .notif { width: 36px; margin-right: 15px; }

.dialog { position: absolute; left: 458px; top: 152px; z-index: 5; width: 1003px; border: 1px solid #5c5c5c; background: #e5e5e5; }
.dtitle { display: flex; align-items: center; height: 30px; padding: 0 1px 0 9px; background: #fff; color: #000; font: 12px/16px Lato, sans-serif; }
.dtitle .grow { margin-left: 6px; }
.dtitle .cap svg { stroke: #000; }
.dbody { border: 2px solid #a9a9a9; border-top: 0; }
.entry { display: flex; padding: 4px 5px 6px 4px; }
.who-col { width: 565px; }
.custbox { display: flex; justify-content: space-between; height: 42px; padding: 4px 2px 0 6px; border: 1px solid #a9a9a9; }
.cust { display: grid; grid-template-columns: 105px auto; grid-auto-rows: 18px; line-height: 16px; align-content: start; }
.addr { grid-column: 1 / 3; }
.ib { width: 32px; height: 32px; flex: none; background: #fff; border: 1px solid #a9a9a9; display: grid; place-items: center; color: #555; }
.ib svg { width: 23px; height: 23px; }
.ib:disabled { background: #efefef; color: #888; }
.fields { display: grid; grid-template-columns: 91px 190px 108px 169px; gap: 2px 0; margin: 6px 0 0 7px; align-items: center; }
.coll { padding-left: 6px; }
.newrow { grid-column: 1; }
.box { height: 21px; min-width: 0; width: 100%; padding: 0 4px; background: #fff; border: 1px solid #a9a9a9; }
.box.off { background: #d2d2d2; }
.r { text-align: right; }
.analysis { flex: 1; display: flex; flex-direction: column; padding: 6px 0 0 12px; line-height: 13px; color: #000; }
.meta { display: grid; grid-template-columns: 86px 121px; gap: 2px 0; margin-top: 5px; align-items: center; align-content: start; }
.meta .ib { grid-column: 2; justify-self: end; }
.pair { display: grid; grid-template-columns: 75px 44px; gap: 2px; }
.lines { padding: 3px 5px 7px 3px; border-bottom: 1px solid #a9a9a9; }
.linegrid { height: 182px; border: 1px solid #a9a9a9; }
.linefields { display: grid; grid-template-columns: 173px minmax(0, 1fr) 73px 73px 215px; gap: 0 6px; margin-top: 3px; }
.linefields label { padding: 0 2px; }
.offc { background: #d2d2d2; }
.offc .dd { background: #efefef; color: #999; }
.focus { border-color: #7ab8e6; }
.focus select { background: #0078d7; color: #fff; outline: 1px dotted #e08a3a; outline-offset: -1px; margin: 0 0 0 1px; }
.policy { display: flex; align-items: center; margin-top: 5px; padding-left: 2px; }
.policy label:first-child { width: 123px; }
.policy label { width: 100px; }
.policy .box { width: 48px; margin-right: 6px; }
.policy .unit { width: 79px; margin-right: 16px; }
.linetools { display: flex; gap: 1px; margin-top: 7px; }
.tabs.last { margin-top: 6px; }
.details { display: flex; align-items: flex-start; padding: 10px 6px 9px 8px; }
.notes { width: 322px; }
.notes label { display: block; padding: 1px; height: 20px; }
textarea { display: block; width: 100%; height: 168px; resize: none; background: #fff; border: 1px solid #a9a9a9; }
fieldset { width: 242px; height: 53px; margin: 22px 0 0 7px; padding: 9px 8px 0; border: 1px solid #a9a9a9; color: #444; }
fieldset .combo { color: #111; width: 224px; }
legend { padding: 0 5px 0 4px; margin-left: -6px; }
.savebar { position: relative; display: flex; gap: 1px; margin-left: auto; align-self: flex-end; }
.hot { background: #d0e8f8; border-color: #2a8dd4; }
.tip { position: absolute; right: -21px; top: 55px; padding: 1px 4px; background: #fff; border: 1px solid #a9a9a9; color: #444; height: 18px; }
</style>
